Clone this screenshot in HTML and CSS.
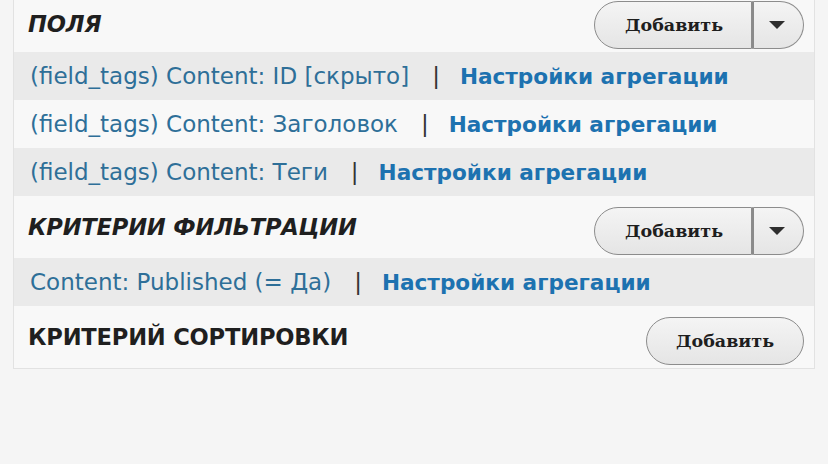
FILE: index.html
```html
<!DOCTYPE html>
<html lang="ru">
<head>
<meta charset="utf-8">
<link rel="stylesheet" href="styles.css">
</head>
<body>
<div class="panel">
  <div class="section-head head-first">
    <h2 class="title italic">ПОЛЯ</h2>
    <div class="btn-group">
      <button class="btn btn-main">Добавить</button>
      <button class="btn btn-drop"><span class="caret"></span></button>
    </div>
  </div>
  <div class="row shade"><span class="label">(field_tags) Content: ID [скрыто]</span><span class="pipe">|</span><a class="link">Настройки агрегации</a></div>
  <div class="row"><span class="label">(field_tags) Content: Заголовок</span><span class="pipe">|</span><a class="link">Настройки агрегации</a></div>
  <div class="row shade"><span class="label">(field_tags) Content: Теги</span><span class="pipe">|</span><a class="link">Настройки агрегации</a></div>

  <div class="section-head">
    <h2 class="title italic">КРИТЕРИИ ФИЛЬТРАЦИИ</h2>
    <div class="btn-group">
      <button class="btn btn-main">Добавить</button>
      <button class="btn btn-drop"><span class="caret"></span></button>
    </div>
  </div>
  <div class="row shade"><span class="label">Content: Published (= Да)</span><span class="pipe">|</span><a class="link">Настройки агрегации</a></div>

  <div class="section-head">
    <h2 class="title">КРИТЕРИЙ СОРТИРОВКИ</h2>
    <div class="btn-group">
      <button class="btn btn-single">Добавить</button>
    </div>
  </div>
</div>
</body>
</html>
```

FILE: styles.css
```css
html, body {
  margin: 0;
  padding: 0;
  background: #f5f5f5;
}
body {
  width: 828px;
  height: 464px;
  overflow: hidden;
  font-family: "DejaVu Sans", sans-serif;
}
.panel {
  margin-left: 13px;
  width: 800px;
  background: #f8f8f8;
  border: 1px solid #e2e2e2;
  border-top: none;
}
.section-head {
  display: flex;
  align-items: flex-end;
  justify-content: space-between;
  height: 62px;
  padding: 0 10px 3px 14px;
  box-sizing: border-box;
}
.head-first {
  height: 52px;
  padding-bottom: 3px;
}
.title {
  align-self: center;
  margin: 0 0 -3px 0;
  font-size: 22.6px;
  font-weight: bold;
  color: #1f1f1f;
  letter-spacing: -0.2px;
}
.head-first .title {
  margin: -2px 0 0 0;
}
.italic {
  font-style: italic;
}
.btn-group {
  display: flex;
  height: 48px;
}
.btn {
  font-family: "DejaVu Serif", serif;
  font-weight: bold;
  font-size: 17.5px;
  color: #1e1e1e;
  background: linear-gradient(#f4f4f4, #e5e5e5);
  border: 1px solid #8c8c8c;
  height: 48px;
  margin: 0;
  padding: 0;
  box-sizing: border-box;
}
.btn-main {
  width: 158px;
  border-radius: 24px 0 0 24px;
  padding-left: 2px;
}
.btn-drop {
  width: 52px;
  border-left: 2px solid #8a8a8a;
  border-radius: 0 24px 24px 0;
  display: flex;
  align-items: center;
  justify-content: center;
  padding-right: 4px;
}
.btn-single {
  width: 158px;
  border-radius: 24px;
}
.caret {
  width: 0;
  height: 0;
  border-left: 8px solid transparent;
  border-right: 8px solid transparent;
  border-top: 8px solid #2e2e2e;
}
.row {
  display: flex;
  align-items: center;
  height: 48px;
  padding-left: 16px;
  font-size: 23px;
  white-space: nowrap;
}
.shade {
  background: #eaeaea;
}
.label {
  color: #2e6f98;
}
.pipe {
  color: #333;
  margin: 0 20px 0 23px;
}
.link {
  color: #1d72b0;
  font-weight: bold;
  font-size: 21.6px;
}
```
